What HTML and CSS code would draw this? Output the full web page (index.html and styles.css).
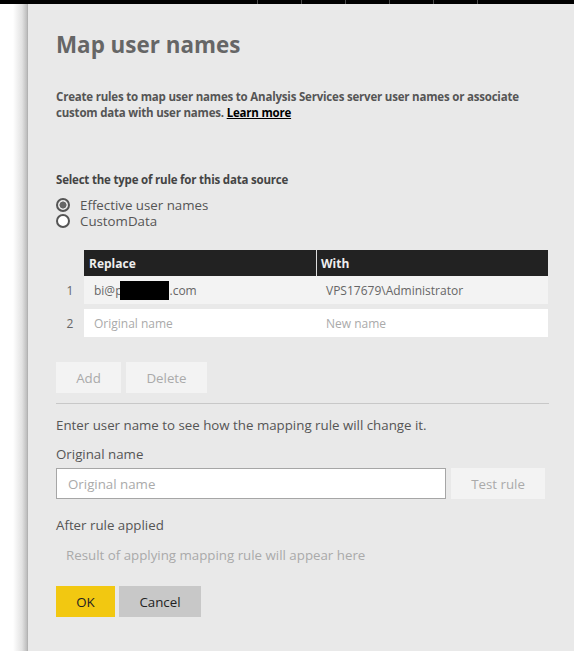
FILE: index.html
```html
<!DOCTYPE html>
<html>
<head>
<meta charset="utf-8">
<link rel="stylesheet" href="styles.css">
</head>
<body>
<div class="topbar">
  <div class="ticks"><span></span><span></span><span></span><span></span><span></span><span></span></div>
</div>
<div class="page">
  <div class="gutter"></div>
  <div class="panel">
    <h1 class="title">Map user names</h1>
    <p class="desc">Create rules to map user names to Analysis Services server user names or associate custom data with user names. <a class="learn">Learn more</a></p>
    <p class="select-label">Select the type of rule for this data source</p>
    <div class="radios">
      <label class="radio"><span class="dot checked"></span>Effective user names</label>
      <label class="radio"><span class="dot"></span>CustomData</label>
    </div>
    <div class="table">
      <div class="row head">
        <div class="num"></div>
        <div class="cell c1">Replace</div>
        <div class="cell c2">With</div>
      </div>
      <div class="row r1">
        <div class="num">1</div>
        <div class="cell c1">bi@p<span class="redact"></span>.com</div>
        <div class="cell c2">VPS17679\Administrator</div>
      </div>
      <div class="row r2">
        <div class="num">2</div>
        <div class="cell c1 ph">Original name</div>
        <div class="cell c2 ph">New name</div>
      </div>
    </div>
    <div class="actions">
      <button class="btn light add">Add</button>
      <button class="btn light del">Delete</button>
    </div>
    <hr class="divider">
    <p class="hint">Enter user name to see how the mapping rule will change it.</p>
    <p class="label">Original name</p>
    <div class="test-row">
      <div class="input">Original name</div>
      <button class="btn light test">Test rule</button>
    </div>
    <p class="label after">After rule applied</p>
    <p class="result">Result of applying mapping rule will appear here</p>
    <div class="footer">
      <button class="btn ok">OK</button>
      <button class="btn cancel">Cancel</button>
    </div>
  </div>
</div>
</body>
</html>
```
FILE: styles.css
```css
* { box-sizing: border-box; }
html, body { margin: 0; padding: 0; }
body {
  background: #fff;
  font-family: "Open Sans", "Liberation Sans", sans-serif;
  width: 574px;
  height: 651px;
  overflow: hidden;
}
.topbar {
  height: 4px;
  background: #000;
}
.ticks {
  display: flex;
  padding-left: 257px;
  height: 4px;
}
.ticks span {
  width: 44px;
  height: 4px;
  border-left: 1px solid #4a4a4a;
}
.page {
  display: flex;
  height: 647px;
}
.gutter {
  width: 28px;
  flex: none;
  background: linear-gradient(to right, #fff 0, #fff 13px, #e2e2e2 22px, #bdbdbd 27px, #a8a8a8 28px);
}
.panel {
  flex: 1;
  background: #e9e9e9;
  padding: 0 25px 0 28px;
}
.title {
  margin: 26px 0 0 0;
  font-size: 22.4px;
  line-height: 30px;
  font-weight: 700;
  color: #666;
}
.desc {
  margin: 29px 0 0 0;
  font-size: 11.5px;
  line-height: 16px;
  font-weight: 700;
  color: #555;
  letter-spacing: -0.2px;
}
.learn {
  color: #000;
  text-decoration: underline;
  line-height: 16px;
}
.select-label {
  margin: 51px 0 0 0;
  font-size: 11.5px;
  line-height: 16px;
  font-weight: 700;
  color: #444;
  letter-spacing: -0.2px;
}
.radios {
  margin-top: 9px;
  display: flex;
  flex-direction: column;
}
.radio {
  display: flex;
  align-items: center;
  height: 16px;
  line-height: 16px;
  font-size: 13.3px;
  color: #555;
}
.dot {
  width: 14px;
  height: 14px;
  border-radius: 50%;
  border: 2px solid #555;
  background: #fff;
  margin-right: 10px;
  flex: none;
}
.dot.checked {
  background: radial-gradient(circle, #666 0, #666 3.2px, #e9e9e9 3.8px);
}
.table {
  margin-top: 21px;
  display: flex;
  flex-direction: column;
}
.row {
  display: flex;
  height: 28px;
  align-items: stretch;
}
.row.head { height: 26px; }
.num {
  width: 28px;
  font-size: 12px;
  color: #666;
  display: flex;
  align-items: center;
  justify-content: center;
}
.cell {
  display: flex;
  align-items: center;
  font-size: 12px;
  color: #666;
}
.c1 { width: 232px; padding-left: 10px; }
.c2 { width: 232px; padding-left: 10px; }
.head .cell {
  background: #222;
  color: #eee;
  font-weight: 700;
  padding-left: 5px;
}
.head .c2 { border-left: 1px solid #ddd; padding-left: 4px; }
.r1 .cell { background: #f3f3f3; }
.r2 { margin-top: 5px; }
.r2 .cell { background: #fff; }
.ph { color: #aaa !important; }
.redact {
  display: inline-block;
  width: 49px;
  height: 19px;
  background: #000;
  margin-left: -2px;
  margin-right: 0;
}
.actions {
  margin-top: 25px;
  display: flex;
  gap: 5px;
}
.btn {
  font-family: inherit;
  border: none;
  height: 31px;
  font-size: 13.3px;
  padding: 0;
}
.btn.light {
  background: #f3f3f3;
  color: #aaa;
}
.add { width: 65px; }
.del { width: 81px; }
.divider {
  margin: 10px 0 0 0;
  border: none;
  border-top: 1px solid #c8c8c8;
  height: 0;
}
.hint {
  margin: 11px 0 0 0;
  font-size: 13.3px;
  line-height: 20px;
  color: #555;
}
.label {
  margin: 9px 0 0 0;
  font-size: 13.3px;
  line-height: 20px;
  color: #555;
}
.test-row {
  margin-top: 4px;
  display: flex;
  gap: 5px;
}
.input {
  width: 390px;
  height: 31px;
  background: #fff;
  border: 1px solid #a6a6a6;
  padding-left: 11px;
  display: flex;
  align-items: center;
  font-size: 13.3px;
  color: #aaa;
}
.test { width: 94px; }
.label.after { margin-top: 16px; }
.result {
  margin: 10px 0 0 10px;
  font-size: 13.3px;
  line-height: 20px;
  color: #aaa;
}
.footer {
  margin-top: 21px;
  display: flex;
  gap: 4px;
}
.ok {
  width: 59px;
  background: #f2c811;
  color: #222;
}
.cancel {
  width: 82px;
  background: #c8c8c8;
  color: #222;
}
```
